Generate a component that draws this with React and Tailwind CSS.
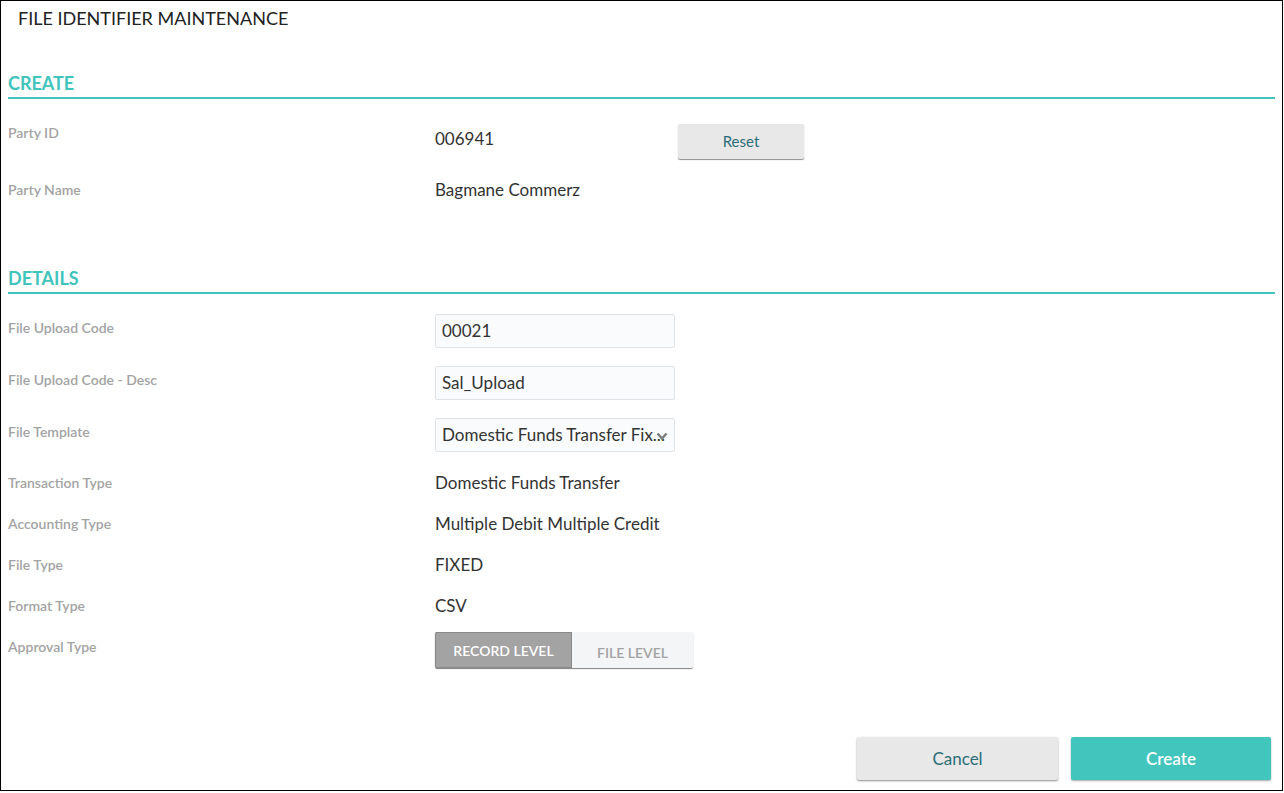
import React from "react";

const font = { fontFamily: '"Lato", "Liberation Sans", sans-serif' };

function Label({ children }) {
  return <div className="w-[427px] shrink-0 text-[14px] leading-[20px] font-semibold text-[#a3a3a3]">{children}</div>;
}

function Row({ label, children }) {
  return (
    <div className="flex items-center">
      <Label>{label}</Label>
      <div className="text-[17px] leading-[24px] text-[#333]">{children}</div>
    </div>
  );
}

function Input({ value, select }) {
  return (
    <div className="relative flex h-[34px] w-[240px] items-center rounded-[2px] border border-[#dfe3e6] bg-[#f9fbfc] pl-[6px] text-[17px] text-[#333]">
      <span className="truncate pr-[2px]">{value}</span>
      {select && (
        <svg className="absolute right-[6px] top-[13px]" width="12" height="9" viewBox="0 0 12 9">
          <path d="M1.5 1.5 L6 6.5 L10.5 1.5" stroke="#7a7a7a" strokeWidth="2.4" fill="none" />
        </svg>
      )}
    </div>
  );
}

function Section({ title }) {
  return (
    <div className="mx-[7px] border-b-2 border-[#40c4bc] pb-[3px] text-[18px] font-bold leading-[22px] text-[#40c4bc]">
      {title}
    </div>
  );
}

export default function App() {
  return (
    <div style={font} className="h-[791px] w-[1283px] border border-black bg-white">
      <div className="flex h-full flex-col">
        <div className="ml-[17px] mt-[6px] text-[18px] leading-[22px] text-[#222]">FILE IDENTIFIER MAINTENANCE</div>
        <div className="mt-[43px]">
          <Section title="CREATE" />
        </div>
        <div className="ml-[7px] mt-[25px] flex items-start">
          <div className="mt-[-1px]"><Label>Party ID</Label></div>
          <div className="mt-[3px] w-[243px] text-[17px] leading-[24px] text-[#333]">006941</div>
          <button className="h-[35px] w-[126px] rounded-[2px] bg-[#e8e8e8] text-[15px] text-[#2b6e78] shadow-[0_1px_1px_rgba(0,0,0,0.45)]">
            Reset
          </button>
        </div>
        <div className="ml-[7px] mt-[19px]">
          <Row label="Party Name">Bagmane Commerz</Row>
        </div>
        <div className="mt-[65px]">
          <Section title="DETAILS" />
        </div>
        <div className="ml-[7px] mt-[20px] flex items-start">
          <div className="mt-[4px]"><Label>File Upload Code</Label></div>
          <Input value="00021" />
        </div>
        <div className="ml-[7px] mt-[18px] flex items-start">
          <div className="mt-[4px]"><Label>File Upload Code - Desc</Label></div>
          <Input value="Sal_Upload" />
        </div>
        <div className="ml-[7px] mt-[18px] flex items-start">
          <div className="mt-[4px]"><Label>File Template</Label></div>
          <Input value="Domestic Funds Transfer Fix..." select />
        </div>
        <div className="ml-[7px] mt-[19px] flex flex-col gap-[17px]">
          <Row label="Transaction Type">Domestic Funds Transfer</Row>
          <Row label="Accounting Type">Multiple Debit Multiple Credit</Row>
          <Row label="File Type">FIXED</Row>
          <Row label="Format Type">CSV</Row>
        </div>
        <div className="ml-[7px] mt-[14px] flex items-start">
          <div className="mt-[5px]"><Label>Approval Type</Label></div>
          <div className="flex h-[36px] w-[258px] overflow-hidden rounded-[2px] shadow-[0_1px_1px_rgba(0,0,0,0.5)]">
            <div className="flex w-[137px] items-center justify-center border border-[#8a8a8a] bg-[#a3a3a3] text-[14px] font-semibold text-white">
              RECORD LEVEL
            </div>
            <div className="flex flex-1 items-end justify-center bg-[#f4f5f7] pb-[5px] text-[14px] font-semibold text-[#a3a3a3]">
              FILE LEVEL
            </div>
          </div>
        </div>
        <div className="mt-auto mb-[10px] mr-[11px] flex justify-end gap-[13px]">
          <button className="h-[43px] w-[201px] rounded-[2px] bg-[#e8e8e8] text-[17px] text-[#2b6e78] shadow-[0_1px_2px_rgba(0,0,0,0.45)]">
            Cancel
          </button>
          <button className="h-[43px] w-[200px] rounded-[2px] bg-[#42c5bd] text-[17px] font-semibold text-white shadow-[0_1px_2px_rgba(0,0,0,0.35)]">
            Create
          </button>
        </div>
      </div>
    </div>
  );
}
